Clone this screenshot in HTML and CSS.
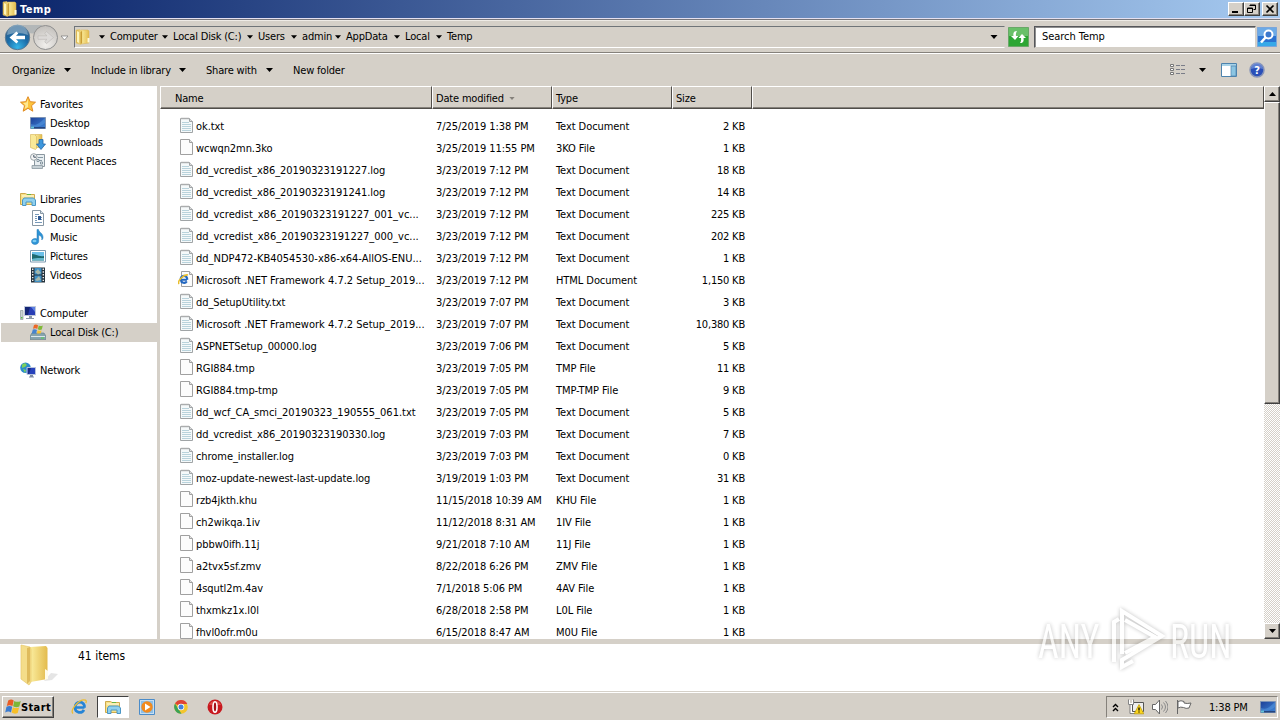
FILE: index.html
```html
<!DOCTYPE html>
<html lang="en">
<head>
    <meta charset="UTF-8">
    <meta name="viewport" content="width=device-width, initial-scale=1.0">
    <title>Temp</title>
    <link rel="stylesheet" href="styles.css">
</head>
<body>
    <!-- Shared icons -->
    <svg class="defs" width="0" height="0">
        <defs>
            <linearGradient id="gold" x1="0" x2="1"><stop offset="0" stop-color="#fbeea0"/><stop offset="1" stop-color="#e3bb4d"/></linearGradient>
            <linearGradient id="goldDark" x1="0" x2="1"><stop offset="0" stop-color="#d9b04a"/><stop offset="1" stop-color="#f7e28b"/></linearGradient>
            <linearGradient id="screen" x1="0" y1="0" x2="1" y2="1"><stop offset="0" stop-color="#1d3f96"/><stop offset="1" stop-color="#3f86d8"/></linearGradient>
            <radialGradient id="blueBall" cx=".5" cy=".9" r=".9"><stop offset="0" stop-color="#35b5e8"/><stop offset=".5" stop-color="#1b6ca8"/><stop offset="1" stop-color="#2f5b86"/></radialGradient>
            <radialGradient id="greyBall" cx=".5" cy=".8" r=".8"><stop offset="0" stop-color="#f1efec"/><stop offset="1" stop-color="#c2bfbb"/></radialGradient>
        </defs>
        <symbol id="folder" viewBox="0 0 16 16">
            <path d="M6 1h7l1 1v12l-8 1z" fill="url(#gold)" stroke="#d9b250" stroke-width=".5"/>
            <path d="M1 1l4-.5 2 2V14l-1.500 1.500L1 14z" fill="url(#goldDark)" stroke="#e2c566" stroke-width=".5"/>
            <path d="M5.500 3L7 2v12l-1.500 1.500z" fill="#c99c33"/><path d="M2 2l2 1v11l-2-1z" fill="#fdf5bd"/>
            <path d="M12.500 9h2v4.500h-2z" fill="#fff8d8"/>
        </symbol>
        <symbol id="text" viewBox="0 0 16 16">
            <path d="M2.500 1.500h9l3 3v11h-12z" fill="#f5f9fa" stroke="#a0a4a6"/>
            <path d="M11.500 1.500v3h3" fill="#ddd" stroke="#a0a4a6"/>
            <path d="M4 .5v2M6 .5v2M8 .5v2M10 .5v2" stroke="#b5b5b5"/>
            <path d="M4 5.500h7M4 7.500h9M4 9.500h9M4 11.500h9M4 13.500h9" stroke="#b9d3dc"/>
        </symbol>
        <symbol id="blank" viewBox="0 0 16 16">
            <path d="M2.500.5h9l3 3v12h-12z" fill="#fcfcfc" stroke="#a0a0a0"/>
            <path d="M11.500.5v3h3" fill="#e4e4e4" stroke="#a0a0a0"/>
        </symbol>
        <symbol id="html" viewBox="0 0 16 16">
            <path d="M3.500.5h8l3 3v12h-11z" fill="#fcfcfc" stroke="#a0a0a0"/>
            <path d="M11.500.5v3h3" fill="#e4e4e4" stroke="#a0a0a0"/>
            <path d="M9 8.700H2.700a3.300 3.300 0 1 1 6.500 0M2.800 9a3.300 3.300 0 0 0 6 1.400" fill="none" stroke="#2367c0" stroke-width="2.100"/>
            <path d="M1 13C-1 10 6 3 10 4" fill="none" stroke="#e9bd2b" stroke-width="1.500"/>
        </symbol>
        <symbol id="ie" viewBox="0 0 16 16">
            <path d="M13.500 8.500H4.200a4.700 4.700 0 1 1 9.300 0M4 9a4.700 4.700 0 0 0 8.900 1.800" fill="none" stroke="#2584d6" stroke-width="2.700"/>
            <path d="M2 14.500C-1.500 11 9-1 14.500 1.200c1 .5 1 1.800.2 3" fill="none" stroke="#ecbc32" stroke-width="1.300"/>
        </symbol>
        <symbol id="star" viewBox="0 0 16 16">
            <path d="M8 .7l2.200 5 5.300.5-4 3.500 1.300 5.500L8 12.300l-4.800 2.900 1.300-5.500-4-3.500 5.300-.5z" fill="#fcc43d" stroke="#e08a22"/>
            <path d="M8 3v8l-3.500 2 1-3.800-2.500-2.300 3.500-.3z" fill="#ffe891"/>
        </symbol>
        <symbol id="desktop" viewBox="0 0 16 16">
            <path d="M.5 2.500h15v11H.5z" fill="url(#screen)" stroke="#7d93b5"/>
            <path d="M1 9c5 2 8 0 14-6v5c-5 4-9 5-14 3z" fill="#5da2e6" opacity=".45"/>
            <path d="M1 12h14v1.500H1z" fill="#24457f"/><path d="M1 11.500h3v2H1z" fill="#64c1d6"/>
        </symbol>
        <symbol id="downloads" viewBox="0 0 16 16">
            <path d="M5 .5h7v13H5z" fill="url(#gold)" stroke="#d5b252" stroke-width=".6"/>
            <path d="M.5.500h4l2 2v12l-1 1-5-2z" fill="#f9e998" stroke="#d5b252" stroke-width=".6"/>
            <path d="M9 5.500h4V10h2.500L11 15.500 6.500 10H9z" fill="#3d97dd" stroke="#2566a6" stroke-width=".8"/>
        </symbol>
        <symbol id="recent" viewBox="0 0 16 16">
            <path d="M4.500 1.500h10v12h-10z" fill="#e8eef1" stroke="#8a979f"/>
            <path d="M2 12.500h10.500v3H2z" fill="#c7d1d6" stroke="#8a979f" stroke-width=".8"/>
            <path d="M8 4.500h5M7 6.500h2v2H7zM10.500 9h2v2h-2zM9 7.500h3" fill="#fff" stroke="#6f8390" stroke-width=".8"/>
            <circle cx="3.800" cy="4" r="3.300" fill="#f5f5f5" stroke="#99a3a8"/><path d="M3.800 2v2.200H6" fill="none" stroke="#456"/>
        </symbol>
        <symbol id="libraries" viewBox="0 0 16 16">
            <path d="M.5 2.500h5l1.500 1h7.500v10H.5z" fill="#f7e189" stroke="#cfaa4b"/>
            <path d="M2 5h12" stroke="#fffbe0"/><path d="M7 3.500h4" stroke="#64b445"/>
            <path d="M2.500 14.500V9l1.500-2h9.500l2 2v5.500H12V11H6v3.500z" fill="#8fd0ee" stroke="#4b96c4"/>
        </symbol>
        <symbol id="documents" viewBox="0 0 16 16">
            <path d="M2.500.5h8l3 3v12h-11z" fill="#fff" stroke="#8797a4"/><path d="M10.500.5v3h3" fill="#dae4eb" stroke="#8797a4"/>
            <path d="M5 4.500h4M5 6.500h2M8 7.500h4M8 9.500h4M5 12.500h7" stroke="#7799b9"/><path d="M8 6h3v4H8z" fill="#2f5a94"/><path d="M5 8.500h2M5 10.500h2" stroke="#7799b9"/>
        </symbol>
        <symbol id="music" viewBox="0 0 16 16">
            <path d="M7 .5h1.500c.5 3 5 4 4.500 8.500-.2 1-.7 1.500-1.300 2C12.500 8 10.500 6.500 8.700 6v6.500C8.500 16.500 1.500 16.500 1.500 12.500c0-2.500 3-3.700 5.500-2.500z" fill="#2e94d6" stroke="#2579b5" stroke-width=".5"/>
            <ellipse cx="4.500" cy="12" rx="2" ry="1.200" fill="#7dccf2"/>
        </symbol>
        <symbol id="pictures" viewBox="0 0 16 16">
            <path d="M.5 2.500h15v11.500H.5z" fill="#fff" stroke="#7f9ab0"/><path d="M2 4h12v5H2z" fill="#6cc0e9"/>
            <path d="M2 6c4 0 6 3 12 2v4.500H2z" fill="#1d6a70"/><path d="M2 11c4-1.500 8-1 12-1v2.500H2z" fill="#64b6cc"/>
        </symbol>
        <symbol id="videos" viewBox="0 0 16 16">
            <path d="M1 .5h14v15H1z" fill="#25323b"/><path d="M4.500 1h7v6.500h-7zM4.500 8.500h7V15h-7z" fill="#3e8fc5"/>
            <path d="M5 5l3-3 3 4-3 1.500zM5 13l4-4 2 4-4 1z" fill="#a4b7ac"/>
            <path d="M2.700 1.500v14M13.300 1.500v14" stroke="#eee" stroke-width="1.400" stroke-dasharray="1.400 1.400"/>
        </symbol>
        <symbol id="computer" viewBox="0 0 16 16">
            <path d="M.5 5.500h2.500v9H.5z" fill="#ccd5d5" stroke="#8d9b9b" stroke-width=".7"/><path d="M1 12h1.500v1.500H1z" fill="#58b948"/>
            <path d="M4.500 1.500h11v9h-11z" fill="#283eb5" stroke="#bfc8d8"/><path d="M5 2h5L8 10H5z" fill="#142575"/><path d="M11 2h4v5z" fill="#5d80e3"/>
            <path d="M9 11h3v2h2v1H6v-1h3z" fill="#8b98a8"/>
        </symbol>
        <symbol id="disk" viewBox="0 0 16 16">
            <path d="M2 9h12l2 3v3.500H0V12z" fill="#86a3ad" stroke="#627b87" stroke-width=".6"/><path d="M1 12.500h14" stroke="#dbe7eb"/>
            <path d="M11 13.500h3v1h-3z" fill="#52d34b"/>
            <path d="M4 1q2-1 4 .3L7.300 5Q5.500 3.800 3 4.800z" fill="#ec6827"/><path d="M8.800 1.500q2 1 4 0l-1 4q-2 1-4-.2z" fill="#80b937"/>
            <path d="M2.800 5.600q2-1 4.200.3L6 9.500H1.700z" fill="#4584ce"/><path d="M7.600 6.200q2 1 4 .2l-1 3.100H7z" fill="#f6c331"/>
        </symbol>
        <symbol id="network" viewBox="0 0 16 16">
            <circle cx="5.500" cy="5.800" r="5.300" fill="#2b8bcc"/><path d="M2 2.500l3-1.500 2 2-2 2-3 1zM3 7l3 1-1 3z" fill="#7bd05d"/>
            <path d="M7 5.500h8.500v7H7z" fill="#2741bb" stroke="#b8c3dc"/><path d="M8 6h3l-2 6H8z" fill="#172b83"/><path d="M10 13h3v1.500h1v1H9v-1h1z" fill="#7f8ca3"/>
        </symbol>
        <symbol id="flag" viewBox="0 0 16 16">
            <path d="M3.200 1.500q3-2 5.500 0L7.500 7Q4.500 5.500 1.800 7z" fill="#e95c25"/><path d="M9.300 2q3 1.700 6.500 0L14.300 7.500q-3 1.500-6.200-.2z" fill="#7db637"/>
            <path d="M1.500 7.800q3-1.600 5.700 0L6 13.500q-2.500-1.800-5.800 0z" fill="#3a7bd0"/><path d="M7.900 8.200q3 1.700 6.200.2l-1.400 5.500q-3 1.600-6.100-.3z" fill="#f7bf28"/>
        </symbol>
        <symbol id="down" viewBox="0 0 7 4"><path d="M0 0h7L3.500 4z"/></symbol>
    </svg>

    <div class="window">
        <div class="title-bar">
            <svg class="icon"><use href="#folder"/></svg>
            <span class="title">Temp</span>
            <div class="window-buttons">
                <span class="btn"><svg width="12" height="10"><path d="M2 7h6v2H2z"/></svg></span>
                <span class="btn"><svg width="12" height="10"><path d="M4 1h5.500v4.500H7.500M3.500 1.500h6M1.500 4h5v4.500h-5zM1 4.500h6" fill="none" stroke="#000"/></svg></span>
                <span class="btn close"><svg width="12" height="10"><path d="M2.500 1.500l7 7M9.500 1.500l-7 7" stroke="#000" stroke-width="1.700"/></svg></span>
            </div>
        </div>

        <div class="address-bar">
            <svg class="nav" width="64" height="28" viewBox="0 0 64 28">
                <path d="M18 2h20l-5 6q-5 5-10 0z" fill="#b3b7b8"/>
                <circle cx="13.500" cy="14.500" r="12.200" fill="url(#blueBall)" stroke="#5c7a92"/>
                <path d="M3 12a10.500 10.500 0 0 1 21 0q-10-4-21 0z" fill="#8eafc8" opacity=".7"/>
                <path d="M5.500 14.500l7-6 1.800 2-2.300 2.300H21v3.500h-9l2.300 2.300-1.800 2z" fill="#fff"/>
                <circle cx="41.500" cy="14.500" r="12" fill="url(#greyBall)" stroke="#8f8f8f"/>
                <path d="M49.500 14.500l-7-6-1.800 2 2.300 2.300h-9v3.500h9l-2.300 2.300 1.800 2z" fill="#dcdad8" stroke="#bfbcb9" stroke-width=".7"/>
                <path d="M57 13h7l-3.500 4z" fill="#fff" stroke="#777" stroke-width=".7"/>
            </svg>
            <div class="address">
                <svg class="icon"><use href="#folder"/></svg>
                <svg class="arrow"><use href="#down"/></svg><span class="w47">Computer</span>
                <svg class="arrow"><use href="#down"/></svg><span class="w69">Local Disk (C:)</span>
                <svg class="arrow"><use href="#down"/></svg><span class="w28">Users</span>
                <svg class="arrow"><use href="#down"/></svg><span class="w28">admin</span>
                <svg class="arrow"><use href="#down"/></svg><span class="w43">AppData</span>
                <svg class="arrow"><use href="#down"/></svg><span class="w25">Local</span>
                <svg class="arrow"><use href="#down"/></svg><span>Temp</span>
                <svg class="arrow history"><use href="#down"/></svg>
            </div>
            <svg class="refresh" width="21" height="20" viewBox="0 0 21 20">
                <path d="M.5.500h20v19H.5z" fill="#2da634" stroke="#69a768"/><path d="M1 1h19v8H1z" fill="#69c069"/>
                <path d="M9 4Q4.500 4 5.500 9H3l4 4 3.500-4H8Q7.500 6 9 4zM12 16q4.500 0 3.500-5H18l-4-4-3.500 4H13q.5 3-1 5z" fill="#fff"/>
            </svg>
            <div class="search">Search Temp</div>
            <svg width="20" height="20" viewBox="0 0 20 20">
                <path d="M.5.500h19v19H.5z" fill="#2a72d1" stroke="#7ba6da"/><path d="M1 1h18v8H1z" fill="#6caae6"/><path d="M1 15h18v4H1z" fill="#37a9e8"/>
                <circle cx="11.500" cy="7.500" r="4" fill="#3b78cd" stroke="#fff" stroke-width="2"/><path d="M8.500 10.500L4 15.500" stroke="#fff" stroke-width="2.600"/>
            </svg>
        </div>

        <div class="toolbar">
            <span class="menu organize">Organize <svg class="arrow"><use href="#down"/></svg></span>
            <span class="menu include">Include in library <svg class="arrow"><use href="#down"/></svg></span>
            <span class="menu share">Share with <svg class="arrow"><use href="#down"/></svg></span>
            <span class="menu">New folder</span>
            <div class="tools">
                <svg width="16" height="12" viewBox="0 0 16 12">
                    <path d="M.5.500h3v2h-3zM.5 4.500h3v2h-3zM.5 8.500h3v2h-3z" fill="#fff" stroke="#777"/>
                    <path d="M6 1.500h4m1 0h4M6 5.500h4m1 0h4M6 9.500h4m1 0h4" stroke="#7a7d88"/>
                </svg>
                <svg class="arrow"><use href="#down"/></svg>
                <svg class="pane" width="16" height="14" viewBox="0 0 16 14">
                    <path d="M.5.500h15v13H.5z" fill="#fff" stroke="#4d83ad"/><path d="M1 1h14v2H1z" fill="#a8d3e8"/><path d="M10 3h5v10h-5z" fill="#8bc5e2" stroke="#4d83ad" stroke-width=".7"/>
                </svg>
                <svg width="16" height="16" viewBox="0 0 16 16">
                    <circle cx="8" cy="8" r="7" fill="#2a4fb8" stroke="#8794b8" stroke-width="1.500"/><path d="M2 7a6 6 0 0 1 12 0q-6-2-12 0z" fill="#7795dc" opacity=".7"/>
                    <text x="8" y="12" class="help">?</text>
                </svg>
            </div>
        </div>

        <div class="content">
            <div class="sidebar">
                <div class="group">
                    <div class="item root"><svg class="icon"><use href="#star"/></svg>Favorites</div>
                    <div class="item"><svg class="icon"><use href="#desktop"/></svg>Desktop</div>
                    <div class="item"><svg class="icon"><use href="#downloads"/></svg>Downloads</div>
                    <div class="item"><svg class="icon"><use href="#recent"/></svg>Recent Places</div>
                </div>
                <div class="group">
                    <div class="item root"><svg class="icon"><use href="#libraries"/></svg>Libraries</div>
                    <div class="item"><svg class="icon"><use href="#documents"/></svg>Documents</div>
                    <div class="item"><svg class="icon"><use href="#music"/></svg>Music</div>
                    <div class="item"><svg class="icon"><use href="#pictures"/></svg>Pictures</div>
                    <div class="item"><svg class="icon"><use href="#videos"/></svg>Videos</div>
                </div>
                <div class="group">
                    <div class="item root"><svg class="icon"><use href="#computer"/></svg>Computer</div>
                    <div class="item selected"><svg class="icon"><use href="#disk"/></svg>Local Disk (C:)</div>
                </div>
                <div class="group">
                    <div class="item root"><svg class="icon"><use href="#network"/></svg>Network</div>
                </div>
            </div>

            <div class="files">
                <div class="row header">
                    <span>Name</span><span>Date modified <svg class="sort"><use href="#down"/></svg></span><span>Type</span><span>Size</span><span></span>
                </div>
                <div class="list">
                    <div class="row"><span><svg class="icon"><use href="#text"/></svg>ok.txt</span><span>7/25/2019 1:38 PM</span><span>Text Document</span><span>2 KB</span></div>
                    <div class="row"><span><svg class="icon"><use href="#blank"/></svg>wcwqn2mn.3ko</span><span>3/25/2019 11:55 PM</span><span>3KO File</span><span>1 KB</span></div>
                    <div class="row"><span><svg class="icon"><use href="#text"/></svg>dd_vcredist_x86_20190323191227.log</span><span>3/23/2019 7:12 PM</span><span>Text Document</span><span>18 KB</span></div>
                    <div class="row"><span><svg class="icon"><use href="#text"/></svg>dd_vcredist_x86_20190323191241.log</span><span>3/23/2019 7:12 PM</span><span>Text Document</span><span>14 KB</span></div>
                    <div class="row long"><span><svg class="icon"><use href="#text"/></svg>dd_vcredist_x86_20190323191227_001_vc...</span><span>3/23/2019 7:12 PM</span><span>Text Document</span><span>225 KB</span></div>
                    <div class="row long"><span><svg class="icon"><use href="#text"/></svg>dd_vcredist_x86_20190323191227_000_vc...</span><span>3/23/2019 7:12 PM</span><span>Text Document</span><span>202 KB</span></div>
                    <div class="row long"><span><svg class="icon"><use href="#text"/></svg>dd_NDP472-KB4054530-x86-x64-AllOS-ENU...</span><span>3/23/2019 7:12 PM</span><span>Text Document</span><span>1 KB</span></div>
                    <div class="row long"><span><svg class="icon"><use href="#html"/></svg>Microsoft .NET Framework 4.7.2 Setup_2019...</span><span>3/23/2019 7:12 PM</span><span>HTML Document</span><span>1,150 KB</span></div>
                    <div class="row"><span><svg class="icon"><use href="#text"/></svg>dd_SetupUtility.txt</span><span>3/23/2019 7:07 PM</span><span>Text Document</span><span>3 KB</span></div>
                    <div class="row long"><span><svg class="icon"><use href="#text"/></svg>Microsoft .NET Framework 4.7.2 Setup_2019...</span><span>3/23/2019 7:07 PM</span><span>Text Document</span><span>10,380 KB</span></div>
                    <div class="row"><span><svg class="icon"><use href="#text"/></svg>ASPNETSetup_00000.log</span><span>3/23/2019 7:06 PM</span><span>Text Document</span><span>5 KB</span></div>
                    <div class="row"><span><svg class="icon"><use href="#blank"/></svg>RGI884.tmp</span><span>3/23/2019 7:05 PM</span><span>TMP File</span><span>11 KB</span></div>
                    <div class="row"><span><svg class="icon"><use href="#blank"/></svg>RGI884.tmp-tmp</span><span>3/23/2019 7:05 PM</span><span>TMP-TMP File</span><span>9 KB</span></div>
                    <div class="row long"><span><svg class="icon"><use href="#text"/></svg>dd_wcf_CA_smci_20190323_190555_061.txt</span><span>3/23/2019 7:05 PM</span><span>Text Document</span><span>5 KB</span></div>
                    <div class="row"><span><svg class="icon"><use href="#text"/></svg>dd_vcredist_x86_20190323190330.log</span><span>3/23/2019 7:03 PM</span><span>Text Document</span><span>7 KB</span></div>
                    <div class="row"><span><svg class="icon"><use href="#text"/></svg>chrome_installer.log</span><span>3/23/2019 7:03 PM</span><span>Text Document</span><span>0 KB</span></div>
                    <div class="row"><span><svg class="icon"><use href="#text"/></svg>moz-update-newest-last-update.log</span><span>3/19/2019 1:03 PM</span><span>Text Document</span><span>31 KB</span></div>
                    <div class="row"><span><svg class="icon"><use href="#blank"/></svg>rzb4jkth.khu</span><span>11/15/2018 10:39 AM</span><span>KHU File</span><span>1 KB</span></div>
                    <div class="row"><span><svg class="icon"><use href="#blank"/></svg>ch2wikqa.1iv</span><span>11/12/2018 8:31 AM</span><span>1IV File</span><span>1 KB</span></div>
                    <div class="row"><span><svg class="icon"><use href="#blank"/></svg>pbbw0ifh.11j</span><span>9/21/2018 7:10 AM</span><span>11J File</span><span>1 KB</span></div>
                    <div class="row"><span><svg class="icon"><use href="#blank"/></svg>a2tvx5sf.zmv</span><span>8/22/2018 6:26 PM</span><span>ZMV File</span><span>1 KB</span></div>
                    <div class="row"><span><svg class="icon"><use href="#blank"/></svg>4squtl2m.4av</span><span>7/1/2018 5:06 PM</span><span>4AV File</span><span>1 KB</span></div>
                    <div class="row"><span><svg class="icon"><use href="#blank"/></svg>thxmkz1x.l0l</span><span>6/28/2018 2:58 PM</span><span>L0L File</span><span>1 KB</span></div>
                    <div class="row"><span><svg class="icon"><use href="#blank"/></svg>fhvl0ofr.m0u</span><span>6/15/2018 8:47 AM</span><span>M0U File</span><span>1 KB</span></div>
                </div>
            </div>

            <div class="scrollbar">
                <span class="btn"><svg width="7" height="4"><path d="M0 4h7L3.500 0z"/></svg></span>
                <span class="btn thumb"></span>
                <span class="btn last"><svg width="7" height="4"><use href="#down"/></svg></span>
            </div>
        </div>

        <div class="details">
            <svg width="42" height="42" viewBox="0 0 42 42">
                <path d="M24 37l7-8 7 1-6 6z" fill="#ccc" opacity=".5"/>
                <path d="M10 3l16-1 1.500 2v31l-17 3z" fill="url(#gold)"/>
                <path d="M1 1l9 2 1 2v33l-2 3-8-6z" fill="#f4dd8a" stroke="#e6c76b" stroke-width=".7"/>
                <path d="M7 4l3-1v34l-3 3z" fill="#dfbb5c"/><path d="M25 25l3 2v8l-3 1z" fill="#fffceb"/>
            </svg>
            <span>41 items</span>
        </div>
    </div>

    <div class="taskbar">
        <div class="start btn"><svg class="icon"><use href="#flag"/></svg>Start</div>
        <div class="task"><svg class="icon"><use href="#ie"/></svg></div>
        <div class="task active"><svg class="icon"><use href="#libraries"/></svg></div>
        <div class="task"><svg class="icon" viewBox="0 0 16 16"><path d="M.5.500h15v15H.5z" fill="#c6def2" stroke="#4b8cc9"/><path d="M2 2h12v12H2z" fill="#8cbfe8"/><circle cx="8" cy="8" r="5.700" fill="#f28a1d"/><path d="M6 4.500v7L11.500 8z" fill="#fff"/></svg></div>
        <div class="task"><svg class="icon" viewBox="0 0 16 16"><circle cx="8" cy="8" r="6.800" fill="#f3c52c"/><path d="M8 8L2 4.500A7 7 0 0 1 14.300 5H8z" fill="#df4335"/><path d="M2 4.500L6 11l2.500 3.800A7 7 0 0 1 2 4.500z" fill="#3ba257"/><circle cx="8" cy="8" r="3.300" fill="#fff"/><circle cx="8" cy="8" r="2.500" fill="#4380dc"/></svg></div>
        <div class="task"><svg class="icon" viewBox="0 0 16 16"><circle cx="8" cy="8" r="7.500" fill="#c8191f"/><path d="M2 6a6.500 6.500 0 0 1 12 0z" fill="#dd4a47"/><ellipse cx="8" cy="8" rx="2" ry="5.200" fill="#a60f16" stroke="#fff" stroke-width="1.600"/></svg></div>
        <div class="tray">
            <svg width="8" height="9" viewBox="0 0 8 9"><path d="M1 4l2.500-2.500L6 4M1 8l2.500-2.500L6 8" fill="none" stroke="#000" stroke-width="1.400"/></svg>
            <svg class="icon" viewBox="0 0 16 16"><path d="M4.500 3.500h11v9h-11z" fill="#eee" stroke="#555"/><path d="M1 1v4h4V1M3 5v9h4" fill="none" stroke="#fff" stroke-width="2"/><path d="M.5.500V5.500h5V.5M2 6v8.500h5" fill="none" stroke="#666" stroke-width=".8"/><path d="M11 5.500l4.800 9.300H6.200z" fill="#fbd51d" stroke="#b89600" stroke-width=".7"/><path d="M11 8.500v3M11 12.500v1" stroke="#000" stroke-width="1.300"/></svg>
            <svg class="icon" viewBox="0 0 16 16"><path d="M.5 5.500h3l4-4.500v14l-4-4.500h-3z" fill="#fff" stroke="#666"/><path d="M9.500 5.500q2 2.500 0 5M11.500 3.500q4 4.500 0 9M13.500 2q5 6 0 12" fill="none" stroke="#8a8a8a"/></svg>
            <svg class="icon" viewBox="0 0 16 16"><path d="M1.500 1v14M2 2.500q3-1.500 6 0v1.500q3 1 7 0l-2 5q-3 1-5.500-.5-3-1-5.500 .5z" fill="#fff" stroke="#666"/></svg>
            <span class="clock">1:38 PM</span>
            <svg class="icon"><use href="#desktop"/></svg>
        </div>
    </div>

    <!-- Watermark over the window -->
    <div class="watermark">
        <span>ANY</span>
        <svg width="62" height="68" viewBox="0 0 62 68">
            <path d="M9 57V17l5-3M17 49V6l40 25-40 24v7l11-6M20 15l30 17-30 16"/>
        </svg>
        <span>RUN</span>
    </div>
</body>
</html>
```
FILE: styles.css
```css
* {
    box-sizing: border-box;
}

body {
    margin: 0;
    width: 1280px;
    height: 720px;
    overflow: hidden;
    display: flex;
    flex-direction: column;
    background-color: #d5d0c8; /* Classic window grey */
    font-family: "DejaVu Sans Condensed", "DejaVu Sans", sans-serif;
    font-stretch: condensed;
    font-size: 11px;
    letter-spacing: -0.18px;
    color: #000;
    white-space: nowrap;
}

svg {
    display: block;
    flex: none;
}

.defs {
    position: absolute;
}

.icon {
    width: 16px;
    height: 16px;
}

.arrow {
    width: 7px;
    height: 4px;
}

.window {
    height: 692px;
    display: flex;
    flex-direction: column;
}

/* Raised 3D button */
.btn {
    display: flex;
    align-items: center;
    justify-content: center;
    background-color: #d5d0c8;
    border: 1px solid;
    border-color: #fff #404040 #404040 #fff;
    box-shadow: inset -1px -1px #85817b;
}

/* Title bar */
.title-bar {
    height: 18px;
    display: flex;
    align-items: center;
    padding-left: 2px;
    background: linear-gradient(to right, #0a246a, #a6caf0);
}

.title {
    margin-left: 2px;
    color: #fff;
    font-weight: bold;
    letter-spacing: 0.5px;
}

.window-buttons {
    display: flex;
    margin-left: auto;
    margin-right: 2px;
}

.window-buttons .btn {
    width: 16px;
    height: 14px;
}

.window-buttons .close {
    margin-left: 2px;
}

/* Address bar */
.address-bar {
    height: 36px;
    display: flex;
    align-items: center;
    padding: 1px 2px 0 4px;
    border-top: 1px solid #e4e0f0;
    border-bottom: 1px solid #fff;
    box-shadow: inset 0 1px #77767c, inset 0 2px #eeebe6, inset 0 -1px #85817b;
}

.address {
    width: 931px;
    height: 22px;
    display: flex;
    align-items: center;
    margin-left: 6px;
    border: 1px solid;
    border-color: #6f7478 #d5d0c8 #fff #6f7478;
}

.address .arrow {
    width: 6px;
    margin-right: 5px;
}

.address .icon + .arrow {
    margin-left: 8px;
}

.address span {
    margin-right: 5px;
}

.address .w47 { width: 47px; }
.address .w69 { width: 69px; }
.address .w28 { width: 28px; }
.address .w43 { width: 43px; }
.address .w25 { width: 26px; }

.address .history {
    width: 8px;
    margin-left: auto;
    margin-right: 6px;
}

.refresh {
    margin: 0 5px 0 3px;
}

.search {
    width: 222px;
    height: 22px;
    margin-right: 1px;
    padding-left: 7px;
    line-height: 20px;
    letter-spacing: -0.05px;
    background-color: #fff;
    border: 1px solid;
    border-color: #55565a #d5d0c8 #d5d0c8 #55565a;
    box-shadow: inset 1px 1px #8f8f8f;
}

/* Toolbar */
.toolbar {
    height: 32px;
    display: flex;
    align-items: center;
    padding: 0 15px 0 12px;
}

.menu {
    display: flex;
    align-items: center;
    justify-content: space-between;
}

.organize {
    width: 59px;
    margin-right: 20px;
}

.include {
    width: 95px;
    margin-right: 20px;
}

.share {
    width: 67px;
    margin-right: 20px;
}

.tools {
    display: flex;
    align-items: center;
    margin-left: auto;
}

.tools .arrow {
    margin-left: 13px;
}

.tools .pane {
    margin: 0 12px 0 15px;
}

.help {
    fill: #fff;
    font-size: 11px;
    font-weight: bold;
    text-anchor: middle;
}

/* Main area */
.content {
    height: 553px;
    display: flex;
    background-color: #fff;
}

.sidebar {
    width: 160px;
    padding-top: 9px;
    border-right: 3px solid #d5d0c8;
}

.group {
    margin-bottom: 19px;
}

.item {
    height: 19px;
    display: flex;
    gap: 4px;
    margin-left: 1px;
    padding-left: 29px;
    line-height: 20px;
}

.item .icon {
    margin-top: 1px;
}

.root {
    padding-left: 19px;
}

.selected {
    background-color: #d5d0c8;
}

.files {
    width: 1104px;
    overflow: hidden;
}

.row {
    height: 22px;
    display: grid;
    grid-template-columns: 272px 120px 120px 80px 1fr;
    align-items: center;
}

.row span {
    display: flex;
    align-items: center;
    padding-left: 4px;
}

.list {
    padding-top: 6px;
    letter-spacing: -0.07px;
}

.list .icon {
    margin-bottom: 2px;
}

.list .row span:first-child {
    gap: 2px;
    padding-left: 18px;
}

.list .long span:first-child {
    letter-spacing: 0;
}

.list .row span:nth-child(4) {
    justify-content: flex-end;
    padding: 0 7px 0 0;
    letter-spacing: -0.2px;
}

.header {
    height: 23px;
    background-color: #d5d0c8;
}

.header span {
    height: 23px;
    padding: 2px 0 0 3px;
    border: 1px solid;
    border-color: #fff #504d49 #504d49 #fff;
    box-shadow: inset 0 -1px #85817b;
}

.header span:first-child {
    padding-left: 14px;
}

.sort {
    width: 6px;
    height: 3px;
    margin-left: 5px;
    fill: #85817b;
}

/* Scrollbar */
.scrollbar {
    width: 16px;
    display: flex;
    flex-direction: column;
    background: repeating-conic-gradient(#d5d0c8 0 25%, #fff 0 50%) 0 0 / 2px 2px;
}

.scrollbar .btn {
    height: 16px;
}

.scrollbar .thumb {
    height: 302px;
}

.scrollbar .last {
    margin-top: auto;
}

/* Details pane */
.details {
    flex: 1;
    display: flex;
    padding-left: 20px;
    background-color: #fff;
    border-top: 5px solid #d5d0c8;
    border-bottom: 1px solid #d5d0c8;
}

.details span {
    margin: 5px 0 0 16px;
    font-size: 12px;
    letter-spacing: 0;
}

/* Taskbar */
.taskbar {
    height: 28px;
    display: flex;
    align-items: center;
    padding: 1px 0 0 2px;
    border-top: 1px solid #fff;
}

.start {
    width: 52px;
    height: 22px;
    margin-right: 9px;
    font-weight: bold;
    letter-spacing: 0.4px;
}

.task {
    width: 32px;
    height: 22px;
    display: flex;
    align-items: center;
    justify-content: center;
    margin-right: 2px;
}

.active {
    background-color: #fff;
    border: 1px solid;
    border-color: #404040 #fff #fff #404040;
}

.tray {
    width: 172px;
    height: 22px;
    display: flex;
    align-items: center;
    margin-left: auto;
    margin-right: 2px;
    padding-left: 5px;
    border: 1px solid;
    border-color: #85817b #fff #fff #85817b;
}

.tray svg + .icon {
    margin-left: 8px;
}

.clock {
    width: 40px;
    margin-left: 17px;
}

.tray .clock + .icon {
    margin-left: 11px;
}

/* Watermark */
.watermark {
    position: absolute;
    left: 1038px;
    top: 605px;
    display: flex;
    align-items: center;
    gap: 3px;
    color: #fff;
    font-family: Roboto, sans-serif;
    font-stretch: condensed;
    font-size: 48px;
    line-height: 60px;
    letter-spacing: 0;
    opacity: 0.7;
    filter: drop-shadow(0 0 2px rgba(0, 0, 0, 0.35));
}

.watermark span {
    width: 64px;
    padding-top: 6px;
    transform: scaleX(0.75);
    transform-origin: left;
}

.watermark path {
    fill: none;
    stroke: #fff;
    stroke-width: 4;
}
```
